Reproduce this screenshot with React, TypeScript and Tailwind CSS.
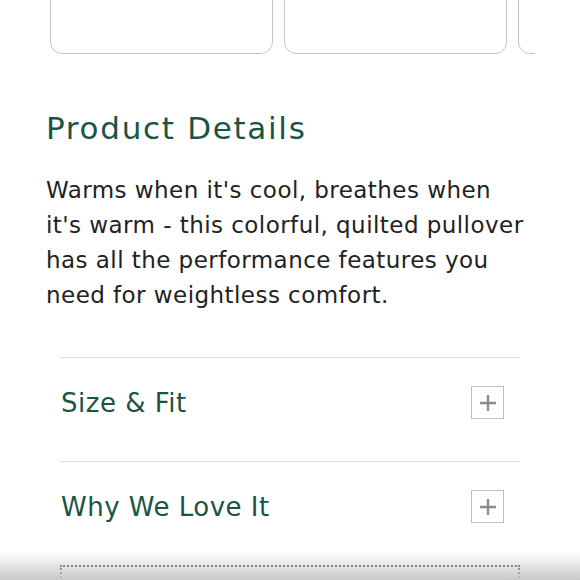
import React from 'react';

const PlusBox = () => (
  <span className="flex h-[33px] w-[33px] shrink-0 items-center justify-center border border-[#bdbdbd]">
    <svg width="18" height="18" viewBox="0 0 18 18">
      <path d="M9 1v16M1 9h16" stroke="#8a8a8a" strokeWidth="2.4" />
    </svg>
  </span>
);

const AccordionRow = ({ title }: { title: string }) => (
  <div className="flex h-[104px] items-start justify-between border-t border-[#dcdcdc] pt-[28px] pl-px pr-[16px]">
    <span className="pt-[1px] text-[26px] leading-[32px] tracking-[0.5px] text-[#1a5443]">{title}</span>
    <PlusBox />
  </div>
);

const lines = [
  "Warms when it's cool, breathes when",
  "it's warm - this colorful, quilted pullover",
  'has all the performance features you',
  'need for weightless comfort.',
];

export default function App() {
  return (
    <div
      className="relative h-[580px] w-[580px] overflow-hidden bg-white"
      style={{ fontFamily: '"DejaVu Sans", "Liberation Sans", sans-serif' }}
    >
      <div className="ml-[50px] mt-[-66px] flex w-[485px] gap-[11px] overflow-hidden">
        {[0, 1, 2].map((i) => (
          <div key={i} className="h-[120px] w-[223px] shrink-0 rounded-[12px] border border-[#c4c4c4]" />
        ))}
      </div>

      <div className="px-[46px]">
        <h2 className="mt-[56px] text-[31px] leading-[36px] tracking-[1.7px] text-[#1a5443]">Product Details</h2>
        <p className="mt-[27px] text-[23px] leading-[35px] tracking-[0.45px] text-[#222]">
          {lines.map((l) => (
            <span key={l} className="block whitespace-nowrap">
              {l}
            </span>
          ))}
        </p>
      </div>

      <div className="mx-[60px] mt-[44px]">
        <AccordionRow title="Size & Fit" />
        <AccordionRow title="Why We Love It" />
        <div className="h-[60px] border-2 border-dotted border-[#444]" />
      </div>

      <div className="pointer-events-none absolute inset-x-0 bottom-0 h-[28px] bg-gradient-to-b from-white/0 to-[#c9c9c9]" />
    </div>
  );
}
